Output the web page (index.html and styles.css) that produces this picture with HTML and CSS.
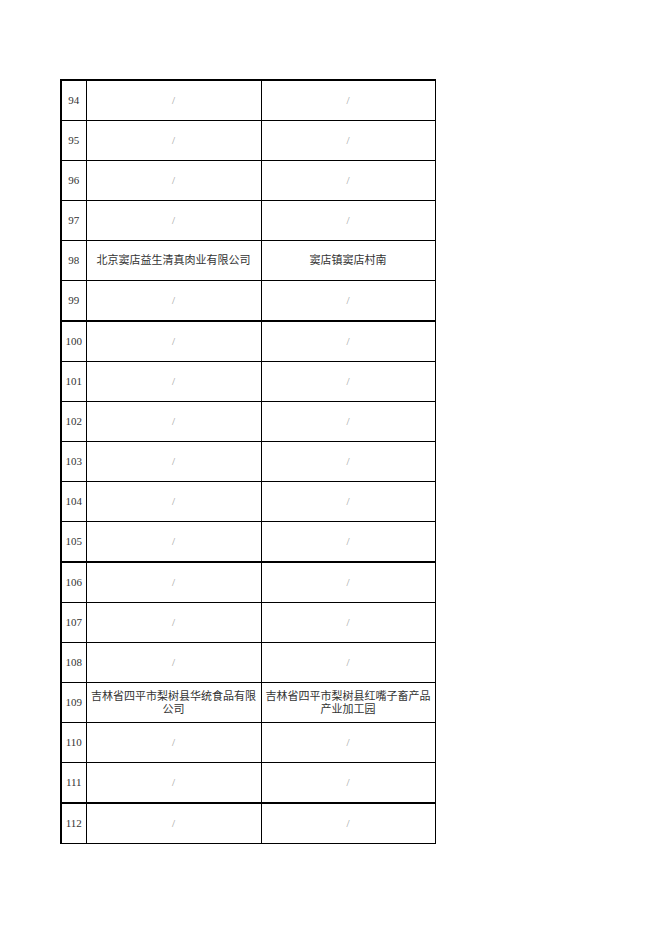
FILE: index.html
```html
<!DOCTYPE html>
<html>
<head>
<meta charset="utf-8">
<link rel="stylesheet" href="styles.css">
</head>
<body>
<table class="sheet">
<colgroup><col class="c-no"><col class="c-name"><col class="c-addr"></colgroup>
<tbody>
<tr><td class="no">94</td><td class="na">/</td><td class="na">/</td></tr>
<tr><td class="no">95</td><td class="na">/</td><td class="na">/</td></tr>
<tr><td class="no">96</td><td class="na">/</td><td class="na">/</td></tr>
<tr><td class="no">97</td><td class="na">/</td><td class="na">/</td></tr>
<tr><td class="no">98</td><td class="txt">北京窦店益生清真肉业有限公司</td><td class="txt">窦店镇窦店村南</td></tr>
<tr class="thick"><td class="no">99</td><td class="na">/</td><td class="na">/</td></tr>
<tr><td class="no">100</td><td class="na">/</td><td class="na">/</td></tr>
<tr><td class="no">101</td><td class="na">/</td><td class="na">/</td></tr>
<tr><td class="no">102</td><td class="na">/</td><td class="na">/</td></tr>
<tr><td class="no">103</td><td class="na">/</td><td class="na">/</td></tr>
<tr><td class="no">104</td><td class="na">/</td><td class="na">/</td></tr>
<tr class="thick"><td class="no">105</td><td class="na">/</td><td class="na">/</td></tr>
<tr><td class="no">106</td><td class="na">/</td><td class="na">/</td></tr>
<tr><td class="no">107</td><td class="na">/</td><td class="na">/</td></tr>
<tr><td class="no">108</td><td class="na">/</td><td class="na">/</td></tr>
<tr><td class="no">109</td><td class="txt">吉林省四平市梨树县华统食品有限公司</td><td class="txt">吉林省四平市梨树县红嘴子畜产品产业加工园</td></tr>
<tr><td class="no">110</td><td class="na">/</td><td class="na">/</td></tr>
<tr class="thick"><td class="no">111</td><td class="na">/</td><td class="na">/</td></tr>
<tr><td class="no">112</td><td class="na">/</td><td class="na">/</td></tr>
</tbody>
</table>
</body>
</html>
```
FILE: styles.css
```css
html, body {
  margin: 0;
  padding: 0;
  background: #fff;
}
body {
  padding: 79px 0 0 60px;
  font-family: "Liberation Serif", "Noto Sans CJK SC", serif;
  font-size: 11px;
  color: #333;
}
.sheet {
  border-collapse: collapse;
  table-layout: fixed;
  width: 374px;
  border-top: 2px solid #000;
  border-left: 2px solid #000;
}
.c-no { width: 25px; }
.c-name { width: 175px; }
.c-addr { width: 174px; }
.sheet td {
  border: 1px solid #000;
  height: 39px;
  padding: 0 1px;
  text-align: center;
  vertical-align: middle;
  line-height: 13px;
}
.sheet tr.thick td {
  border-bottom: 2px solid #000;
}
.sheet td.no {
  color: #333;
  font-size: 11px;
}
.sheet td.na {
  color: #999;
  font-size: 11px;
}
.sheet td.txt {
  color: #333;
  font-size: 11px;
}
```
